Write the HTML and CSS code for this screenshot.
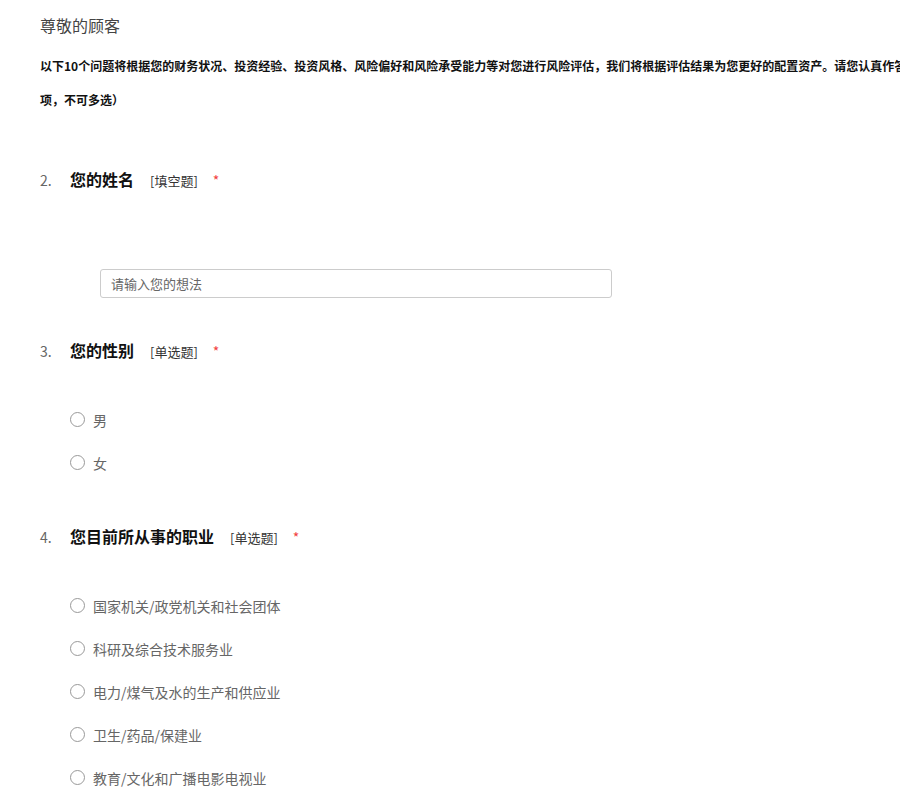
FILE: index.html
```html
<!DOCTYPE html>
<html lang="zh-CN">
<head>
<meta charset="utf-8">
<title>风险评估问卷</title>
<link rel="stylesheet" href="styles.css">
</head>
<body>
<div class="page">
  <div class="greeting">尊敬的顾客</div>
  <p class="intro">以下10个问题将根据您的财务状况、投资经验、投资风格、风险偏好和风险承受能力等对您进行风险评估，我们将根据评估结果为您更好的配置资产。请您认真作答（每题只能选一项，不可多选）</p>

  <div class="survey">
    <div class="question">
      <div class="q-title">
        <span class="q-num">2.</span>
        <span class="q-text">您的姓名</span>
        <span class="q-type">[填空题]</span>
        <span class="q-req">*</span>
      </div>
      <div class="fill">
        <input class="fill-input" type="text" placeholder="请输入您的想法">
      </div>
    </div>

    <div class="question">
      <div class="q-title">
        <span class="q-num">3.</span>
        <span class="q-text">您的性别</span>
        <span class="q-type">[单选题]</span>
        <span class="q-req">*</span>
      </div>
      <ul class="options">
        <li class="option"><span class="radio"></span><span class="opt-label">男</span></li>
        <li class="option"><span class="radio"></span><span class="opt-label">女</span></li>
      </ul>
    </div>

    <div class="question">
      <div class="q-title">
        <span class="q-num">4.</span>
        <span class="q-text">您目前所从事的职业</span>
        <span class="q-type">[单选题]</span>
        <span class="q-req">*</span>
      </div>
      <ul class="options">
        <li class="option"><span class="radio"></span><span class="opt-label">国家机关/政党机关和社会团体</span></li>
        <li class="option"><span class="radio"></span><span class="opt-label">科研及综合技术服务业</span></li>
        <li class="option"><span class="radio"></span><span class="opt-label">电力/煤气及水的生产和供应业</span></li>
        <li class="option"><span class="radio"></span><span class="opt-label">卫生/药品/保建业</span></li>
        <li class="option"><span class="radio"></span><span class="opt-label">教育/文化和广播电影电视业</span></li>
      </ul>
    </div>
  </div>
</div>
</body>
</html>
```

FILE: styles.css
```css
html {
  overflow: hidden;
}

body {
  margin: 0;
  background: #fff;
  font-family: "Microsoft YaHei", "Noto Sans CJK SC", "Noto Sans", sans-serif;
  color: #333;
}

.page {
  padding-left: 40px;
  width: 956px;
}

.greeting {
  margin-top: 15px;
  font-size: 16px;
  line-height: 20px;
  color: #444;
}

.intro {
  margin: 14px 0 50px;
  font-size: 12px;
  line-height: 34px;
  font-weight: 700;
  color: #111;
}

.survey {
  display: flex;
  flex-direction: column;
  gap: 40px;
}

.q-title {
  display: flex;
  align-items: baseline;
  height: 24px;
  line-height: 24px;
}

.q-num {
  width: 30px;
  font-size: 14px;
  color: #666;
}

.q-text {
  font-size: 16px;
  font-weight: 700;
  color: #111;
}

.q-type {
  margin-left: 16px;
  font-size: 13px;
  color: #333;
}

.q-req {
  margin-left: 15px;
  font-size: 14px;
  color: #f24141;
}

.fill {
  margin-top: 78px;
  padding-left: 60px;
}

.fill-input {
  display: block;
  box-sizing: border-box;
  width: 512px;
  height: 29px;
  margin: 0;
  padding: 0 10px;
  border: 1px solid #ccc;
  border-radius: 3px;
  font-family: inherit;
  font-size: 13px;
  color: #333;
  outline: none;
}

.fill-input::placeholder {
  color: #666;
}

.options {
  list-style: none;
  margin: 36px 0 0;
  padding: 0 0 0 30px;
}

.option {
  display: flex;
  align-items: center;
  height: 43px;
}

.radio {
  box-sizing: border-box;
  width: 15px;
  height: 15px;
  border: 1px solid #999;
  border-radius: 50%;
  flex: none;
}

.opt-label {
  margin-left: 8px;
  font-size: 14px;
  color: #666;
}
```
